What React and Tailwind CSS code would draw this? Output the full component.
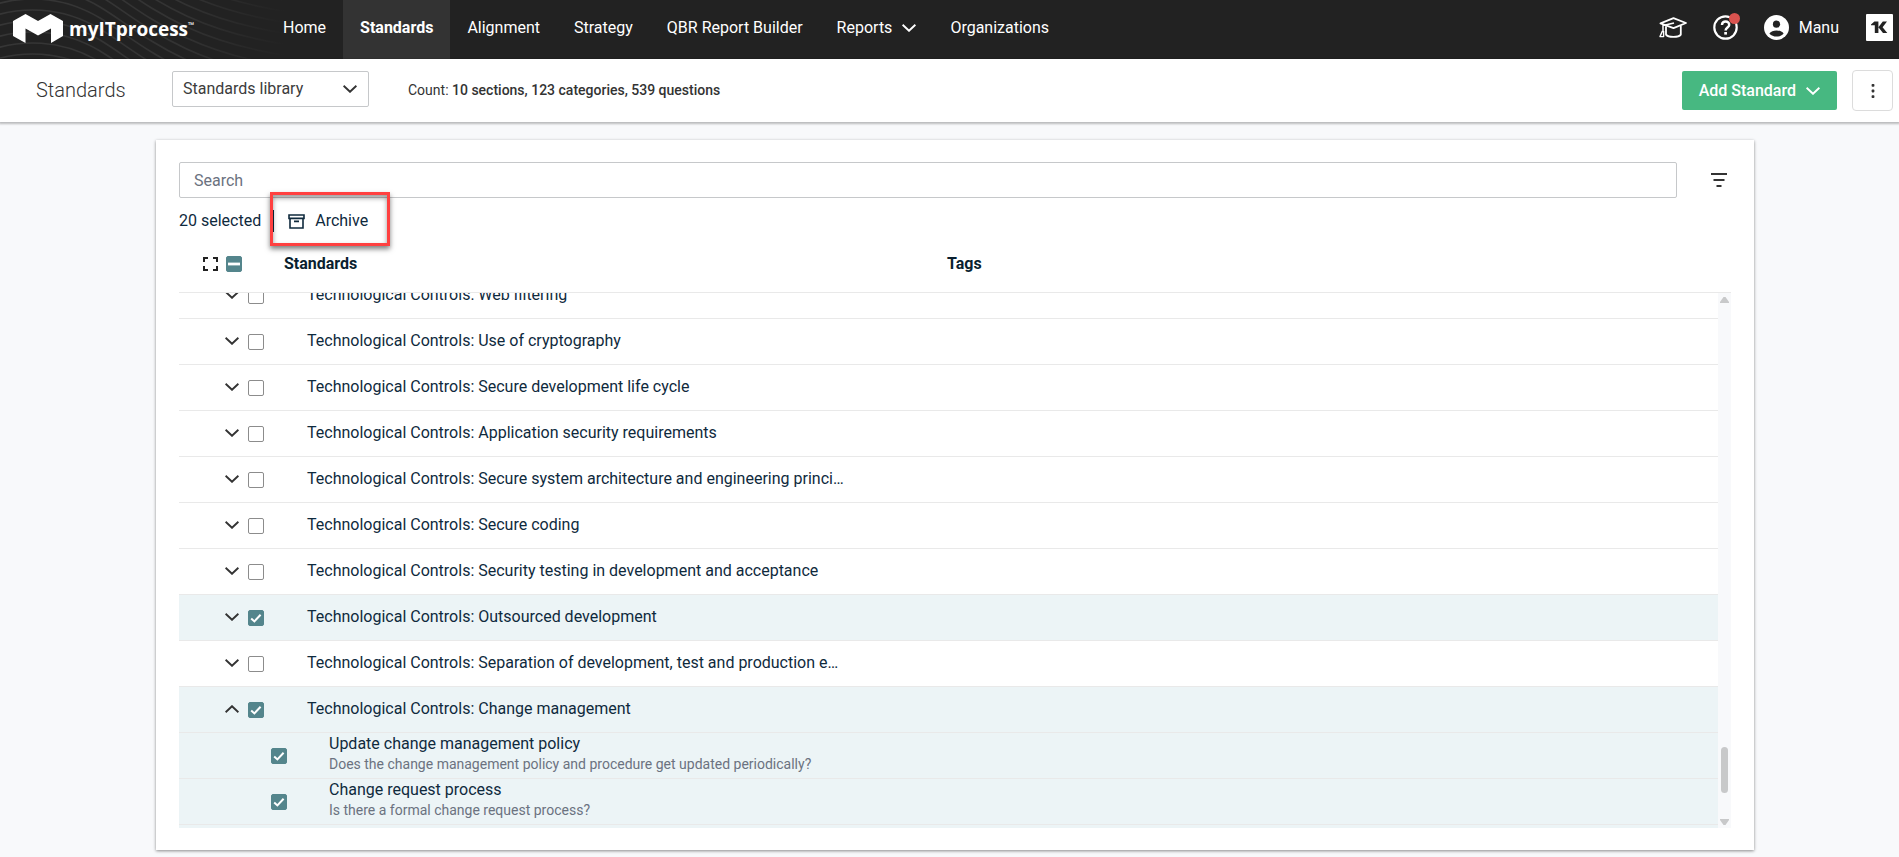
import { useEffect, useRef, useState } from "react";

const navLinks = [
  { label: "Home" },
  { label: "Standards", active: true },
  { label: "Alignment" },
  { label: "Strategy" },
  { label: "QBR Report Builder" },
  { label: "Reports", menu: true },
  { label: "Organizations" },
];

const initialRows = [
  { id: 1, title: "Technological Controls: Web filtering" },
  { id: 2, title: "Technological Controls: Use of cryptography" },
  { id: 3, title: "Technological Controls: Secure development life cycle" },
  { id: 4, title: "Technological Controls: Application security requirements" },
  { id: 5, title: "Technological Controls: Secure system architecture and engineering princi…" },
  { id: 6, title: "Technological Controls: Secure coding" },
  { id: 7, title: "Technological Controls: Security testing in development and acceptance" },
  { id: 8, title: "Technological Controls: Outsourced development", checked: true },
  { id: 9, title: "Technological Controls: Separation of development, test and production e…" },
  { id: 10, title: "Technological Controls: Change management", checked: true, open: true },
  {
    id: 11,
    title: "Update change management policy",
    question: "Does the change management policy and procedure get updated periodically?",
    checked: true,
  },
  {
    id: 12,
    title: "Change request process",
    question: "Is there a formal change request process?",
    checked: true,
  },
];

function Chevron({ up = false, className = "w-[14px]" }) {
  return (
    <svg viewBox="0 0 14 8" fill="none" stroke="currentColor" strokeWidth="1.9" className={className}>
      <path d={up ? "M0.6 7.2 L7 1.2 L13.4 7.2" : "M0.6 0.8 L7 6.8 L13.4 0.8"} />
    </svg>
  );
}

function Waves() {
  const offsets = [-110, -99, -88, -77, -66, -55, -44, -33, -22, -11, 0, 11, 22, 33, 44, 55];
  return (
    <svg viewBox="0 0 300 59" className="absolute left-0 top-0 h-full w-[300px]" fill="none">
      <defs>
        <linearGradient id="waveFade" x1="0" x2="300" y1="0" y2="0" gradientUnits="userSpaceOnUse">
          <stop offset="0" stopColor="#363636" />
          <stop offset="0.6" stopColor="#333333" />
          <stop offset="0.95" stopColor="#222222" />
        </linearGradient>
      </defs>
      {offsets.map((y) => (
        <path
          key={y}
          d={`M-10 ${y + 6} C20 ${y - 4} 60 ${y - 6} 100 ${y + 18} S180 ${y + 84} 290 ${y + 100}`}
          stroke="url(#waveFade)"
          strokeWidth="1.6"
        />
      ))}
    </svg>
  );
}

function Logo() {
  return (
    <a href="#home" className="relative flex items-center gap-1.5 pl-[13px] text-white">
      <svg viewBox="0 0 50 29" className="h-[29px] w-[50px]" fill="currentColor">
        <path d="M0 7 L12.5 0 L25 7 L37.5 0 L50 7 V22 L38 29 V14.5 L25 21.5 L12.5 14.5 V29 L0 22 Z" />
      </svg>
      <span className="flex items-start font-['Open_Sans'] text-[19px] leading-6 font-bold">
        myITprocess
        <span className="text-[8px] leading-4">™</span>
      </span>
    </a>
  );
}

function TopNav() {
  return (
    <header className="relative flex h-[59px] items-stretch bg-[#222222] text-white">
      <Waves />
      <div className="flex w-[266px] items-center pb-0.5">
        <Logo />
      </div>
      <nav className="relative flex items-stretch">
        {navLinks.map((link) => (
          <a
            key={link.label}
            href="#nav"
            className={`flex items-center gap-2.5 px-[17px] pb-1 text-base ${
              link.active ? "bg-[#333333] font-bold" : ""
            }`}
          >
            {link.label}
            {link.menu && <Chevron />}
          </a>
        ))}
      </nav>
      <div className="ml-auto flex items-center pr-1.5 pb-1">
        <button aria-label="Training" className="mr-[26px]">
          <svg viewBox="0 0 28 22" className="w-7" fill="none" stroke="currentColor" strokeWidth="1.8" strokeLinejoin="round">
            <path d="M1.5 6.4 L14.5 1.2 L27 6 L14.5 11.2 Z" />
            <path d="M7 9.2 V17.6 C9.5 20.8 19.5 20.6 21.8 17.6 V8.6" />
            <path d="M15 6 L4 8.6 V15" strokeWidth="1.5" />
            <path d="M3.4 14 L1 19.6 H4.6 V14" strokeWidth="1.4" />
          </svg>
        </button>
        <button aria-label="Help" className="relative mr-[26px]">
          <svg viewBox="0 0 25 25" className="w-[25px]" fill="none" stroke="currentColor">
            <circle cx="12.5" cy="12.5" r="11.2" strokeWidth="2.2" />
            <path d="M9 10 C9 5.2 16.4 5.4 16.2 10 C16 12.6 12.6 12.6 12.6 15.6" strokeWidth="2.5" />
            <path d="M12.6 17 V19.6" strokeWidth="2.7" />
          </svg>
          <span className="absolute -top-0.5 -right-0.5 size-[11px] rounded-full bg-[#d9534f]" />
        </button>
        <button className="mr-[27px] flex items-center gap-2.5 text-base">
          <svg viewBox="0 0 25 25" className="w-[25px]">
            <circle cx="12.5" cy="12.5" r="12.5" fill="#fff" />
            <circle cx="12.5" cy="9.2" r="3.6" fill="#222" />
            <path d="M5.4 18.4 C8 14.4 17 14.4 19.6 18.4 C16 22.6 9 22.6 5.4 18.4 Z" fill="#222" />
          </svg>
          Manu
        </button>
        <button aria-label="Apps">
          <svg viewBox="0 0 27 27" className="w-[27px]">
            <rect width="27" height="27" rx="1" fill="#fff" />
            <path
              d="M5 10.6 L8.4 7.6 H12.4 V19 H8.8 V11.2 H5 Z M12.4 13.2 L16.8 7.6 H21 L16.6 13.2 L21.3 19 H17 Z"
              fill="#222"
            />
          </svg>
        </button>
      </div>
    </header>
  );
}

function SubHeader() {
  return (
    <div className="relative flex h-[63px] items-center bg-white pr-1.5 pl-9 text-[#333333] shadow-[0_1px_2px_1px_rgba(0,0,0,0.25)]">
      <h1 className="w-[136px] pb-0.5 text-xl font-light">Standards</h1>
      <div className="relative flex items-center pb-1">
        <select
          aria-label="Library"
          className="h-9 w-[197px] appearance-none rounded-xs border border-[#c6c8ca] bg-white pl-2.5 text-base text-[#3c3c3c]"
        >
          <option>Standards library</option>
        </select>
        <Chevron className="pointer-events-none absolute right-3 w-[14px]" />
      </div>
      <p className="ml-[39px] pb-0.5 text-sm">
        Count: <span className="font-medium">10 sections, 123 categories, 539 questions</span>
      </p>
      <button className="ml-auto flex h-[39px] items-center gap-2.5 rounded-xs bg-[#47b881] px-[17px] text-base font-medium text-white">
        Add Standard
        <Chevron className="w-[14px]" />
      </button>
      <button
        aria-label="More actions"
        className="ml-[15px] flex size-[41px] items-center justify-center rounded border border-[#dcdcdc]"
      >
        <svg viewBox="0 0 4 14" className="h-[14px] w-1" fill="#333">
          <rect x="0.6" y="0" width="2.8" height="2.8" rx="0.8" />
          <rect x="0.6" y="5.6" width="2.8" height="2.8" rx="0.8" />
          <rect x="0.6" y="11.2" width="2.8" height="2.8" rx="0.8" />
        </svg>
      </button>
    </div>
  );
}

function Checkbox({ label, checked, mixed, onChange }) {
  return (
    <span className="grid size-4 shrink-0 place-items-center">
      <input
        type="checkbox"
        aria-label={label}
        checked={checked}
        onChange={onChange}
        className="col-start-1 row-start-1 size-4 appearance-none rounded-xs border border-[#8c8c8c] bg-white checked:border-[#54858c] checked:bg-[#54858c]"
      />
      {checked && (
        <svg
          viewBox="0 0 16 16"
          className="pointer-events-none col-start-1 row-start-1 size-4"
          fill="none"
          stroke="#fff"
        >
          <path d={mixed ? "M2 8 H14" : "M3.2 8.4 L6.4 11.4 L12.6 4.8"} strokeWidth={mixed ? 2.8 : 2} />
        </svg>
      )}
    </span>
  );
}

function StandardRow({ row, onToggle }) {
  return (
    <tr className={`flex h-[46px] border-b border-[#e9e9e9] ${row.checked ? "bg-[#ecf4f6]" : ""}`}>
      {row.question ? (
        <>
          <td className="flex w-[150px] items-center pl-[92px]">
            <Checkbox label={row.title} checked={!!row.checked} onChange={() => onToggle(row.id)} />
          </td>
          <td className="flex flex-col pt-px">
            <span className="text-base leading-5 text-[#0f2a3d]">{row.title}</span>
            <span className="text-sm leading-5 text-[#6b7280]">{row.question}</span>
          </td>
        </>
      ) : (
        <>
          <td className="flex w-32 items-center gap-[9px] pl-[46px]">
            <button aria-label={row.open ? "Collapse" : "Expand"} className="pb-0.5 text-[#333333]">
              <Chevron up={row.open} />
            </button>
            <Checkbox label={row.title} checked={!!row.checked} onChange={() => onToggle(row.id)} />
          </td>
          <td className="flex items-center pb-0.5 text-base text-[#0f2a3d]">{row.title}</td>
        </>
      )}
      <td />
    </tr>
  );
}

function ScrollTrack() {
  return (
    <div className="absolute right-0 bottom-0 flex h-[calc(100vh-322px)] w-[13px] flex-col items-center bg-[#f8f9fb] pt-1 pb-[3px]">
      <svg viewBox="0 0 9 6" className="w-[9px]" fill="#c8c9ca">
        <path d="M3.5 0 H5.5 L9 5 V6 H0 V5 Z" />
      </svg>
      <div className="mt-auto mb-[26px] h-[46px] w-[7px] rounded-full bg-[#c8c9ca]" />
      <svg viewBox="0 0 9 6" className="w-[9px]" fill="#c8c9ca">
        <path d="M3.5 6 H5.5 L9 1 V0 H0 V1 Z" />
      </svg>
    </div>
  );
}

function App() {
  const [rows, setRows] = useState(initialRows);
  const bodyRef = useRef(null);

  useEffect(() => {
    bodyRef.current.scrollTop = 20;
  }, []);

  const toggleRow = (id) => {
    setRows((prev) => prev.map((row) => (row.id === id ? { ...row, checked: !row.checked } : row)));
  };

  return (
    <div className="min-h-screen bg-[#f8f9fb] font-[Roboto,sans-serif]">
      <TopNav />
      <SubHeader />

      <main className="mt-[18px] mr-[145px] ml-[156px] bg-white px-[23px] pt-[22px] pb-[22px] shadow-[0_1px_3px_rgba(0,0,0,0.45)]">
        {/* Search */}
        <div className="flex items-center">
          <input
            type="text"
            aria-label="Search"
            placeholder="Search"
            className="h-9 flex-1 rounded-xs border border-[#c6c8ca] px-[14px] text-base placeholder:text-[#6b7280]"
          />
          <button aria-label="Filter" className="mr-1 ml-[34px]">
            <svg viewBox="0 0 16 14" className="w-4" fill="none" stroke="#333" strokeWidth="2">
              <path d="M0 1 H16 M2.5 7 H13.5 M5.5 13 H10.5" />
            </svg>
          </button>
        </div>

        {/* Bulk actions */}
        <div className="flex h-[46px] items-center text-base text-[#0f2a3d]">
          <span>20 selected</span>
          <div className="relative ml-3 flex h-[22px] items-center border-l border-[#0f2a3d] pl-[14px]">
            <button className="flex items-center gap-2.5">
              <svg viewBox="0 0 17 15" className="w-[17px]" fill="none" stroke="currentColor" strokeWidth="1.6">
                <path d="M1 1 H16 V4.4 H1 Z M2 4.4 V14 H15 V4.4 M6 7.4 H11" />
              </svg>
              Archive
            </button>
            <span className="pointer-events-none absolute -top-[18px] -left-1 h-[54px] w-[120px] border-3 border-[#ff4040] shadow-[0_3px_5px_rgba(0,0,0,0.5),inset_0_3px_5px_rgba(0,0,0,0.4)]" />
          </div>
        </div>

        {/* Standards table */}
        <div className="relative">
          <table className="block w-full text-left">
            <thead className="block border-b border-[#e9e9e9]">
              <tr className="flex h-12 items-center pb-2 text-base text-[#0a1f30]">
                <th className="flex w-[105px] items-center gap-2 pl-6">
                  <svg viewBox="0 0 15 14" className="w-[15px]" fill="none" stroke="#222" strokeWidth="2">
                    <path d="M1 5 V1 H5 M10 1 H14 V5 M14 9 V13 H10 M5 13 H1 V9" />
                  </svg>
                  <Checkbox label="Select all" checked mixed onChange={() => {}} />
                </th>
                <th className="w-[663px]">Standards</th>
                <th>Tags</th>
              </tr>
            </thead>
            <tbody ref={bodyRef} className="block h-[calc(100vh-322px)] overflow-hidden pr-[13px]">
              {rows.map((row) => (
                <StandardRow key={row.id} row={row} onToggle={toggleRow} />
              ))}
              <tr className="flex h-[46px] bg-[#ecf4f6]">
                <td />
              </tr>
            </tbody>
          </table>
          <ScrollTrack />
        </div>
      </main>
    </div>
  );
}

export default App;
